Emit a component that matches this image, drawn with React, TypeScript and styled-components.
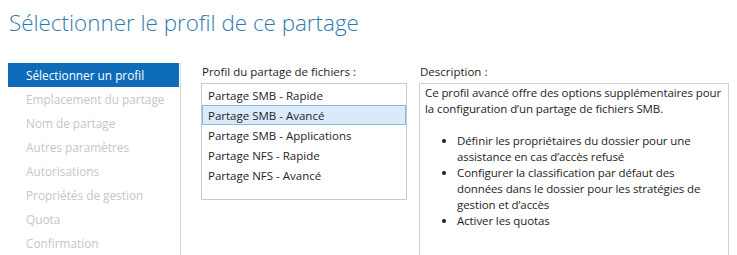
import React from 'react';
import styled, { createGlobalStyle } from 'styled-components';

const GlobalStyle = createGlobalStyle`
  html, body {
    margin: 0;
    padding: 0;
    background: #ffffff;
  }
  body {
    font-family: "Open Sans", "Noto Sans", sans-serif;
    font-size: 11.5px;
    color: #1e1e1e;
    overflow: hidden;
  }
`;

const steps = [
  'Sélectionner un profil',
  'Emplacement du partage',
  'Nom de partage',
  'Autres paramètres',
  'Autorisations',
  'Propriétés de gestion',
  'Quota',
  'Confirmation',
];

const profiles = [
  'Partage SMB - Rapide',
  'Partage SMB - Avancé',
  'Partage SMB - Applications',
  'Partage NFS - Rapide',
  'Partage NFS - Avancé',
];

const App = () => {
  return (
    <>
      <GlobalStyle />
      <Page>
        <Header>
          <Title>Sélectionner le profil de ce partage</Title>
        </Header>
        <Body>
          <Nav>
            {steps.map((step, i) => (
              <NavItem key={step} active={i === 0}>
                {step}
              </NavItem>
            ))}
          </Nav>
          <Main>
            <ProfileColumn>
              <Label>Profil du partage de fichiers :</Label>
              <ListBox>
                {profiles.map((p, i) => (
                  <ListItem key={p} selected={i === 1}>
                    {p}
                  </ListItem>
                ))}
              </ListBox>
            </ProfileColumn>
            <DescColumn>
              <Label>Description :</Label>
              <DescBox>
                <Para>
                  Ce profil avancé offre des options supplémentaires pour
                  <br />
                  la configuration d’un partage de fichiers SMB.
                </Para>
                <Bullets>
                  <li>
                    Définir les propriétaires du dossier pour une
                    <br />
                    assistance en cas d’accès refusé
                  </li>
                  <li>
                    Configurer la classification par défaut des
                    <br />
                    données dans le dossier pour les stratégies de
                    <br />
                    gestion et d’accès
                  </li>
                  <li>Activer les quotas</li>
                </Bullets>
              </DescBox>
            </DescColumn>
          </Main>
        </Body>
      </Page>
    </>
  );
};

const Page = styled.div`
  width: 737px;
  height: 255px;
  overflow: hidden;
  display: flex;
  flex-direction: column;
`;

const Header = styled.div`
  height: 64px;
  padding: 7px 0 0 9px;
  box-sizing: border-box;
`;

const Title = styled.h1`
  margin: 0;
  font-family: "Open Sans", "Noto Sans", sans-serif;
  font-weight: 300;
  font-size: 22.4px;
  line-height: 32px;
  color: #2e7bb0;
  white-space: nowrap;
`;

const Body = styled.div`
  flex: 1;
  display: flex;
`;

const Nav = styled.div`
  width: 172px;
  margin-left: 8px;
  border-right: 1px solid #d6d6d6;
  display: flex;
  flex-direction: column;
`;

const NavItem = styled.div<{ active?: boolean }>`
  height: 24px;
  line-height: 25px;
  padding-left: 18px;
  margin-right: 1px;
  white-space: nowrap;
  font-size: 11.8px;
  color: ${(p) => (p.active ? '#ffffff' : '#c6c6c6')};
  background: ${(p) => (p.active ? '#0e6bba' : 'transparent')};
`;

const Main = styled.div`
  flex: 1;
  display: flex;
  padding-left: 20px;
  gap: 12px;
`;

const ProfileColumn = styled.div`
  width: 206px;
  display: flex;
  flex-direction: column;
`;

const DescColumn = styled.div`
  width: 310px;
  display: flex;
  flex-direction: column;
`;

const Label = styled.div`
  height: 20px;
  line-height: 17px;
  padding-left: 1px;
  white-space: nowrap;
`;

const ListBox = styled.div`
  height: 117px;
  box-sizing: border-box;
  border: 1px solid #c9c9c9;
  padding-top: 1px;
`;

const ListItem = styled.div<{ selected?: boolean }>`
  height: 20px;
  line-height: 19px;
  box-sizing: border-box;
  padding-left: 5px;
  white-space: nowrap;
  border: 1px solid ${(p) => (p.selected ? '#86b9e6' : 'transparent')};
  background: ${(p) => (p.selected ? '#dbeafb' : 'transparent')};
`;

const DescBox = styled.div`
  flex: 1;
  border: 1px solid #d0d0d0;
  border-bottom: none;
  padding: 1px 5px 0;
  line-height: 16px;
  letter-spacing: -0.1px;
  white-space: nowrap;
`;

const Para = styled.p`
  margin: 0 0 16px;
`;

const Bullets = styled.ul`
  margin: 0;
  padding-left: 32px;
  list-style: disc;
`;

export default App;
